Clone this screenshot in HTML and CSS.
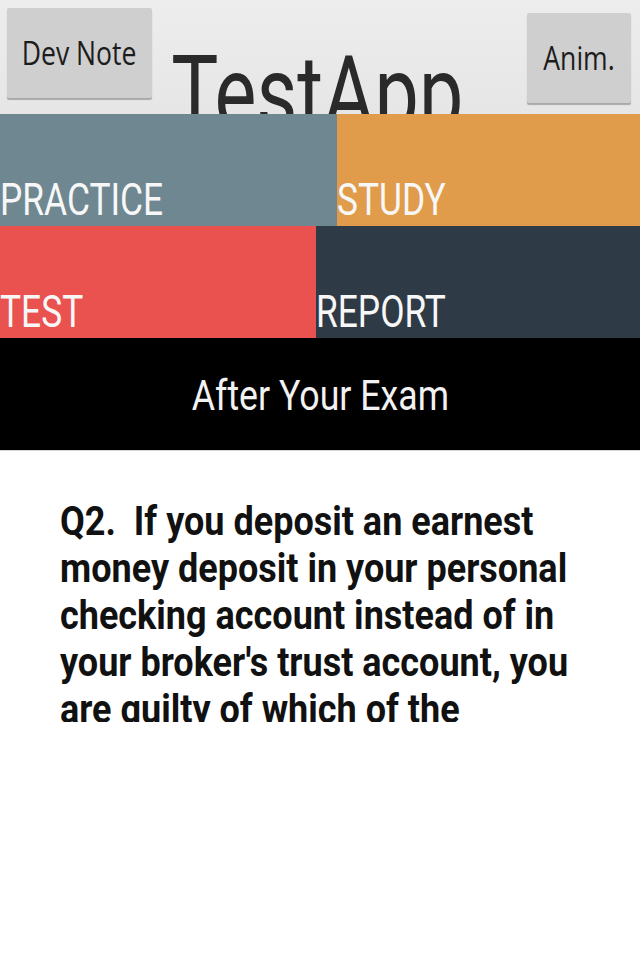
FILE: index.html
```html
<!DOCTYPE html>
<html>
<head>
<meta charset="utf-8">
<link rel="stylesheet" href="styles.css">
</head>
<body>
<header class="topbar">
  <button class="btn btn-dev"><span class="cond">Dev Note</span></button>
  <div class="title"><span class="title-text">TestApp</span></div>
  <button class="btn btn-anim"><span class="cond">Anim.</span></button>
</header>
<div class="tiles">
  <div class="row row-a">
    <div class="tile practice"><span class="tile-text">PRACTICE</span></div>
    <div class="tile study"><span class="tile-text">STUDY</span></div>
  </div>
  <div class="row row-b">
    <div class="tile test"><span class="tile-text">TEST</span></div>
    <div class="tile report"><span class="tile-text">REPORT</span></div>
  </div>
</div>
<div class="section-bar"><span class="section-text">After Your Exam</span></div>
<main class="question-pane">
  <p class="question">Q2.&nbsp; If you deposit an earnest<br>money deposit in your personal<br>checking account instead of in<br>your broker's trust account, you<br>are guilty of which of the<br>following?</p>
</main>
</body>
</html>
```
FILE: styles.css
```css
* { box-sizing: border-box; }
html, body {
  margin: 0;
  padding: 0;
  width: 640px;
  height: 960px;
  background: #ffffff;
  overflow: hidden;
}
body {
  font-family: Roboto, "Open Sans", sans-serif;
}
.topbar {
  height: 114px;
  background: linear-gradient(#ededed, #e6e6e6);
  display: flex;
  align-items: flex-start;
  overflow: hidden;
}
.btn {
  flex: none;
  border: none;
  padding: 0;
  margin: 0;
  background: #cfcfcf;
  border-radius: 2px;
  box-shadow: 0 2px 1px #a9a9a9;
  display: flex;
  align-items: center;
  justify-content: center;
  font-family: "Open Sans", sans-serif;
  font-size: 32px;
  color: #1c1c1c;
  overflow: visible;
}
.btn .cond {
  display: inline-block;
  transform: scaleX(0.83);
  white-space: nowrap;
  line-height: 1;
}
.btn-dev {
  width: 145px;
  height: 90px;
  margin-top: 8px;
  margin-left: 7px;
}
.btn-anim {
  width: 104px;
  height: 90px;
  margin-top: 13px;
  margin-right: 9px;
}
.title {
  flex: 1 1 0;
  min-width: 0;
  display: flex;
  justify-content: center;
  padding-right: 44px;
  margin-top: 42px;
  height: 104px;
}
.title-text {
  flex: none;
  display: inline-block;
  font-size: 104px;
  line-height: 104px;
  color: #2a2a2a;
  white-space: nowrap;
  transform: scaleX(0.76);
}
.row {
  display: flex;
  height: 112px;
}
.tile {
  display: flex;
  align-items: flex-end;
  color: #f7f7f7;
  font-size: 45px;
  overflow: hidden;
}
.tile-text {
  display: inline-block;
  line-height: 1;
  padding-bottom: 4px;
  transform: scaleX(0.785);
  transform-origin: left center;
  white-space: nowrap;
}
.practice { width: 337px; background: #6f8791; }
.study { flex: 1; background: #e09b4b; }
.test { width: 316px; background: #ea5250; }
.report { flex: 1; background: #2f3a47; }
.section-bar {
  height: 113px;
  background: #000000;
  border-bottom: 1px solid #d6d6d6;
  display: flex;
  align-items: center;
  justify-content: center;
}
.section-text {
  display: inline-block;
  color: #f2f2f2;
  font-size: 42px;
  line-height: 1;
  padding-top: 4px;
  transform: scaleX(0.85);
  white-space: nowrap;
}
.question-pane {
  height: 271px;
  overflow: hidden;
  padding-top: 47px;
  padding-left: 60px;
}
.question {
  margin: 0;
  font-weight: 700;
  font-size: 41px;
  line-height: 47px;
  color: #111111;
  white-space: nowrap;
  transform: scaleX(0.878);
  transform-origin: left top;
}
```
